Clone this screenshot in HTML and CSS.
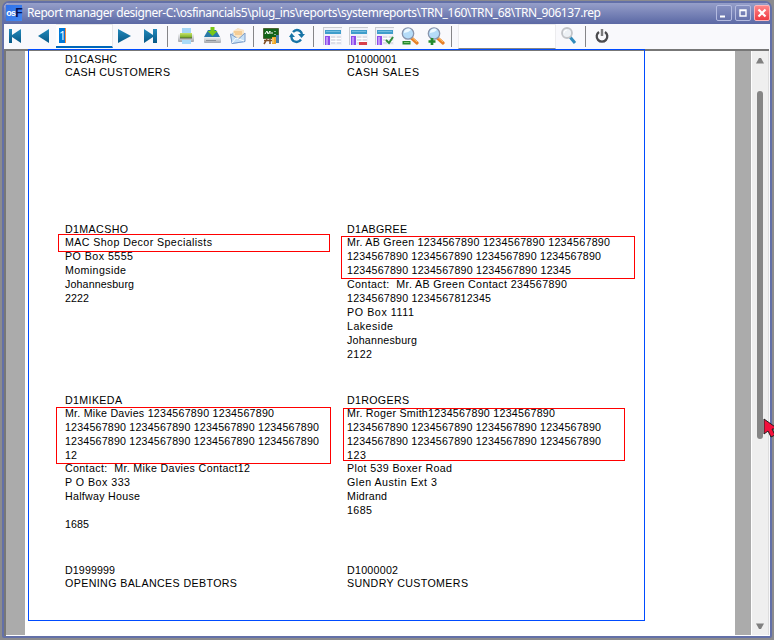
FILE: index.html
```html
<!DOCTYPE html>
<html lang="en">
<head>
<meta charset="utf-8">
<title>Report manager designer</title>
<link rel="stylesheet" href="styles.css">
</head>
<body>
<svg class="defs" width="0" height="0" aria-hidden="true">
  <defs>
    <linearGradient id="blue" x1="0" y1="0" x2="0" y2="1"><stop offset="0" stop-color="#248abb"/><stop offset="1" stop-color="#075987"/></linearGradient>
    <linearGradient id="tray" x1="0" y1="0" x2="0" y2="1"><stop offset="0" stop-color="#f1f2f4"/><stop offset="1" stop-color="#a4a7ad"/></linearGradient>
    <linearGradient id="green" x1="0" y1="0" x2="0" y2="1"><stop offset="0" stop-color="#c8e36a"/><stop offset="1" stop-color="#6da61c"/></linearGradient>
    <symbol id="layout" viewBox="0 0 19 18">
      <path d="M0 0h19v18H0z" fill="#c9cbd0"/><path d="M1 1h18v17H1z" fill="#f1f2f8"/>
      <path d="M2 3h16v4H2z" fill="#3f9dcb"/><path d="M3 4h14v1H3z" fill="#73bddf"/>
      <path d="M2 9h5v9H2z" fill="#8d4bea"/><path d="M3 10h2v8H3z" fill="#bd93f8"/>
      <path d="M8 9h10v8H8z" fill="#dedfe7"/><path d="M8 11.500h10M8 14.500h10M13 9v8" stroke="#fff"/>
    </symbol>
    <symbol id="lens" viewBox="0 0 18 18">
      <path d="m10.500 11 5.500 5" stroke="#e77f27" stroke-width="3.200" stroke-linecap="round"/><path d="m11 10.500 5 4.500" stroke="#ffc66e" stroke-width="1"/>
      <circle cx="7" cy="6.500" r="5.700" fill="#b5dcf8" stroke="#8994ac" stroke-width="1.300"/><path d="M3 6a4 4 0 0 1 7-3Q7 6 3 6" fill="#edf9ff"/>
    </symbol>
  </defs>
</svg>
<div class="window">
  <header class="titlebar">
    <span class="logo"><b>os</b><i>F</i></span>
    <h1 class="title fit" data-width="574">Report manager designer-C:\osfinancials5\plug_ins\reports\systemreports\TRN_160\TRN_68\TRN_906137.rep</h1>
    <div class="controls">
      <button class="control" aria-label="Minimize"><svg width="16" height="16"><path d="M4 10.500h5v2H4z" fill="#fff"/></svg></button>
      <button class="control" aria-label="Maximize"><svg width="16" height="16"><path d="M5 5h6v6H5zM5 5.500h6" fill="none" stroke="#fff" stroke-width="1.400"/></svg></button>
      <button class="control close" aria-label="Close"><svg width="16" height="16"><path d="m4.500 4.500 7 7m0-7-7 7" stroke="#fff" stroke-width="2.200"/></svg></button>
    </div>
  </header>
  <nav class="toolbar">
    <span class="tool first"><svg width="18" height="18"><path d="M3 2h3v6l9-6v14L6 10v6H3z" fill="url(#blue)"/></svg></span>
    <span class="tool prev"><svg width="18" height="18"><path d="M15 2v14L4 9z" fill="url(#blue)"/></svg></span>
    <span class="page-input"><span class="selected">1</span></span>
    <span class="tool next"><svg width="18" height="18"><path d="M3 2v14l13-7z" fill="url(#blue)"/></svg></span>
    <span class="tool"><svg width="18" height="18"><path d="M3 2v14l9-6v6h4V2h-4v6z" fill="url(#blue)"/></svg></span>
    <span class="sep s1"></span>
    <span class="tool t1"><svg width="18" height="18"><path d="M5 1h9v7H5z" fill="#a5d6f5"/><path d="M1 8q0-1 1-1h14q1 0 1 1v6q0 1-1 1H2q-1 0-1-1z" fill="url(#tray)"/><path d="M3 6h12v5H3z" fill="url(#green)"/><path d="M3 10.500h12v1H3z" fill="#55623c"/><path d="M5 13h9v4H5z" fill="#a9dbf8"/></svg></span>
    <span class="tool"><svg width="18" height="18"><path d="M5 3h8l4 7H1z" fill="#2a79a8"/><path d="M1 10h17v5q0 1-1 1H2q-1 0-1-1z" fill="url(#tray)"/><path d="M3 13.500h10" stroke="#8d9299"/><path d="M7.500 0h4v4h3l-5 5-5-5h3z" fill="#78c817"/></svg></span>
    <span class="tool"><svg width="18" height="18"><path d="m1 8 8-7 7 6v8L3 17z" fill="#a9c8e8"/><path d="m4 4 5-3 6 2v7l-10 2z" fill="#fbe5c4"/><path d="M5 5h8M6 7h7" stroke="#efb569"/><path d="m1.500 7 8 5 6.500-6v8.500L3 16.500z" fill="#c7e1f7" stroke="#7e9cc6"/><path d="m3 16 4-5 8 3" fill="none" stroke="#fff"/></svg></span>
    <span class="sep s2"></span>
    <span class="tool t2"><svg width="18" height="18"><path d="M1.500 1.500h15v10h-15z" fill="#126417" stroke="#4d6335"/><path d="m3 7 2-3 1 3 2-3v3m2-2v2m3-3v1m0 2v1" fill="none" stroke="#fff"/><path d="m5 12-3 5m6-5v5M2 13.500h9" stroke="#815027" stroke-width="1.500"/><path d="M10 10h4v7h-4z" fill="#f1a728"/><path d="M14 8h3v8h-3z" fill="#437ca9"/><path d="M11 11v5" stroke="#ffe18a"/></svg></span>
    <span class="tool"><svg width="18" height="18"><path d="M5 5Q8 1.500 12 4q2 1.500 2 4M13 12.500q-3 4-7.500 1.500Q3 12 3.500 9" fill="none" stroke="#1774a6" stroke-width="2.400"/><path d="M10 7h7l-3.500 4zM1 10h6L3.500 6z" fill="#1774a6"/></svg></span>
    <span class="sep s3"></span>
    <span class="tool t3"><svg width="19" height="18"><use href="#layout"/></svg></span>
    <span class="tool"><svg width="19" height="18"><use href="#layout"/><path d="M10 15h8v3h-8z" fill="#d8414b"/></svg></span>
    <span class="tool"><svg width="19" height="18"><use href="#layout"/><path d="m11 13 3 3 4-6" fill="none" stroke="#318d3c" stroke-width="2"/></svg></span>
    <span class="tool"><svg width="18" height="18"><use href="#lens"/><path d="M1.500 14h8v3.500h-8z" fill="#278a2e"/><path d="M3 15.500h5.500" stroke="#7dca74"/></svg></span>
    <span class="tool"><svg width="18" height="18"><use href="#lens"/><path d="M1.500 14.500h7M5 11v7" stroke="#238a2d" stroke-width="2.700"/></svg></span>
    <span class="sep s4"></span>
    <span class="search-input"></span>
    <span class="tool"><svg width="18" height="18"><path d="m10 10 5 6" stroke="#318bbb" stroke-width="3"/><circle cx="7" cy="6" r="5" fill="#edf1f5" stroke="#c2c4c8" stroke-width="1.800"/><path d="M4 6q0-3 3-3" stroke="#fff" fill="none"/></svg></span>
    <span class="sep s5"></span>
    <span class="tool power"><svg width="18" height="18"><path d="M6 5a5.300 5.300 0 1 0 6 0" fill="none" stroke="#4b4b4e" stroke-width="2.300"/><path d="M9 2v7" stroke="#7b7b7d" stroke-width="2.400"/></svg></span>
  </nav>
  <div class="viewer">
    <main class="paper">
      <div class="sheet">
        <section class="label"><p class="code fit" data-width="52">D1CASHC</p><p class="fit" data-width="105">CASH CUSTOMERS</p></section>
        <section class="label"><p class="code fit" data-width="50">D1000001</p><p class="fit" data-width="72">CASH SALES</p></section>
        <section class="label">
          <p class="code fit" data-width="63">D1MACSHO</p>
          <p class="fit" data-width="147">MAC Shop Decor Specialists</p>
          <p class="fit" data-width="68">PO Box 5555</p>
          <p class="fit" data-width="61">Momingside</p>
          <p class="fit" data-width="69">Johannesburg</p>
          <p class="fit" data-width="24">2222</p>
          <span class="mark mark-mac"></span>
        </section>
        <section class="label">
          <p class="code fit" data-width="60">D1ABGREE</p>
          <p class="fit" data-width="263">Mr. AB Green 1234567890 1234567890 1234567890</p>
          <p class="fit" data-width="254">1234567890 1234567890 1234567890 1234567890</p>
          <p class="fit" data-width="224">1234567890 1234567890 1234567890 12345</p>
          <p class="fit" data-width="220">Contact:  Mr. AB Green Contact 234567890</p>
          <p class="fit" data-width="144">1234567890 1234567812345</p>
          <p class="fit" data-width="67">PO Box 1111</p>
          <p class="fit" data-width="46">Lakeside</p>
          <p class="fit" data-width="70">Johannesburg</p>
          <p class="fit" data-width="25">2122</p>
          <span class="mark mark-green"></span>
        </section>
        <section class="label">
          <p class="code fit" data-width="57">D1MIKEDA</p>
          <p class="fit" data-width="209">Mr. Mike Davies 1234567890 1234567890</p>
          <p class="fit" data-width="254">1234567890 1234567890 1234567890 1234567890</p>
          <p class="fit" data-width="254">1234567890 1234567890 1234567890 1234567890</p>
          <p class="tail fit" data-width="12">12</p>
          <p class="fit" data-width="185">Contact:  Mr. Mike Davies Contact12</p>
          <p class="fit" data-width="65">P O Box 333</p>
          <p class="fit" data-width="75">Halfway House</p>
          <p class="blank"></p>
          <p class="fit" data-width="24">1685</p>
          <span class="mark mark-davies"></span>
        </section>
        <section class="label">
          <p class="code fit" data-width="62">D1ROGERS</p>
          <p class="fit" data-width="208">Mr. Roger Smith1234567890 1234567890</p>
          <p class="fit" data-width="254">1234567890 1234567890 1234567890 1234567890</p>
          <p class="fit" data-width="254">1234567890 1234567890 1234567890 1234567890</p>
          <p class="tail fit" data-width="19">123</p>
          <p class="fit" data-width="105">Plot 539 Boxer Road</p>
          <p class="fit" data-width="90">Glen Austin Ext 3</p>
          <p class="fit" data-width="40">Midrand</p>
          <p class="fit" data-width="25">1685</p>
          <span class="mark mark-smith"></span>
        </section>
        <section class="label"><p class="code fit" data-width="50">D1999999</p><p class="fit" data-width="172">OPENING BALANCES DEBTORS</p></section>
        <section class="label"><p class="code fit" data-width="51">D1000002</p><p class="fit" data-width="121">SUNDRY CUSTOMERS</p></section>
      </div>
    </main>
    <aside class="scrollbar">
      <svg class="up" width="10" height="7"><path d="M1 6.500 4 1h2l3 5.500z" fill="#808080"/></svg>
      <span class="thumb"></span>
      <svg class="down" width="10" height="7"><path d="M1 .5 4 6h2l3-5.500z" fill="#808080"/></svg>
    </aside>
  </div>
</div>
<svg class="pointer" width="12" height="22"><path d="M1 1v15l4-3 3 6 4-2-3-6h6z" fill="#f4103c" stroke="#202020"/></svg>
<script src="fit.js"></script>
</body>
</html>
```

FILE: styles.css
```css
* { box-sizing: border-box; }
body { margin: 0; width: 774px; height: 640px; overflow: hidden; background: #8b8b8e; font-family: "Liberation Sans", Arial, sans-serif; }
.defs { position: absolute; }
p, h1 { margin: 0; }
.window { width: 770px; height: 637px; margin: 1px 2px 2px; border: 2px solid #6370a8; border-radius: 7px 7px 2px 2px; background: #f9f9fb; overflow: hidden; display: flex; flex-direction: column; }
.titlebar { height: 21px; flex: none; display: flex; align-items: center; padding: 0 0 1px 2px; background: linear-gradient(#969fc9, #7883b7 50%, #6370aa 85%, #5c69a4); }
.logo { width: 16px; height: 16px; margin: 0 5px 0 0; background: linear-gradient(135deg, #2e71e8, #4286f2); color: #fff; font-size: 9px; line-height: 16px; display: flex; justify-content: center; letter-spacing: -.7px; }
.logo i { color: #07104d; font-size: 12px; font-weight: bold; font-style: normal; }
.title { color: #fff; font: 12px/18px "Noto Sans", "Open Sans", sans-serif; white-space: pre; }
.controls { margin: -1px 0 0 auto; display: flex; gap: 3px; }
.control { width: 16px; height: 16px; padding: 0; border: 1px solid #b4bbe0; border-radius: 2px; background: linear-gradient(#858fc0, #6773ac); display: grid; place-items: center; }
.control svg { display: block; margin: -1px; }
.close { background: linear-gradient(#ff8588, #ee3b42); border-color: #ffb4b7; }
.toolbar { height: 25px; flex: none; display: flex; background: #f9f9fc; }
.tool { width: 26px; flex: none; display: flex; justify-content: center; padding-top: 3px; }
.tool svg { display: block; }
.first { width: 22px; }
.prev { margin-left: 4px; }
.page-input { width: 57px; height: 24px; padding: 3px 0 0 3px; background: #fff; border: solid #e7e7e9; border-width: 1px 1px 0 0; border-bottom: 2px solid #0067b8; }
.selected { display: block; width: 7px; height: 15px; background: #0078d7; color: #fff; font: 12px/15px "Open Sans", sans-serif; border-right: 1px solid #f58a43; }
.next { margin-left: -2px; }
.sep { width: 1px; height: 21px; margin-top: 2px; background: #858588; flex: none; }
.s1 { margin-left: 4px; }
.t1 { margin-left: 5px; }
.s2 { margin-left: 2px; }
.t2 { margin-left: 4px; }
.s3 { margin-left: 3px; }
.t3 { margin-left: 5px; }
.s4 { margin-left: 2px; }
.search-input { width: 98px; height: 25px; margin-left: 6px; background: #fff; border: 1px solid #ececee; border-bottom-color: #858585; }
.s5 { margin-left: 3px; }
.power { margin-left: 3px; }
.viewer { flex: 1; display: flex; min-height: 0; margin-right: 1px; padding-bottom: 1px; border: solid #777; border-width: 2px 0 0 2px; background: #fff; }
.paper { width: 745px; flex: none; border: solid #ababab; border-width: 0 16px 0 19px; background: #fff; padding-left: 3px; }
.sheet { width: 617px; height: 572px; margin-top: -2px; border: 1px solid #004bff; padding: 2px 0 0 36px; display: grid; grid-template-columns: 282px 298px; grid-template-rows: 170px 171px 170px 56px; }
.label { position: relative; font-size: 10.67px; line-height: 14px; color: #000; }
.label p { height: 14px; width: max-content; white-space: pre; }
.label .code { height: 13px; line-height: 15px; }
.label .tail { margin-bottom: -1px; }
.mark { position: absolute; border: 1px solid #f00; }
.mark-mac { left: -7px; top: 12px; width: 272px; height: 18px; }
.mark-green { left: -6px; top: 14px; width: 294px; height: 43px; }
.mark-davies { left: -9px; top: 14px; width: 275px; height: 57px; }
.mark-smith { left: -4px; top: 15px; width: 282px; height: 53px; }
.scrollbar { width: 17px; margin-left: 1px; background: #efefef; border-right: 1px solid #ddd; display: flex; flex-direction: column; align-items: center; padding: 6px 1px 5px 0; }
.thumb { width: 6px; height: 348px; margin-top: 27px; border-radius: 3px; background: #858585; }
.down { margin-top: auto; }
.pointer { position: absolute; left: 763px; top: 418px; }
```

FILE: fit.js
```js
// Spread each line's characters over its measured print width.
document.querySelectorAll('.fit').forEach(function (line) {
  var range = document.createRange();
  range.selectNodeContents(line);
  var natural = range.getBoundingClientRect().width;
  var gap = (Number(line.dataset.width) - natural) / (line.textContent.length - 1);
  line.style.letterSpacing = gap.toFixed(3) + 'px';
});
```
